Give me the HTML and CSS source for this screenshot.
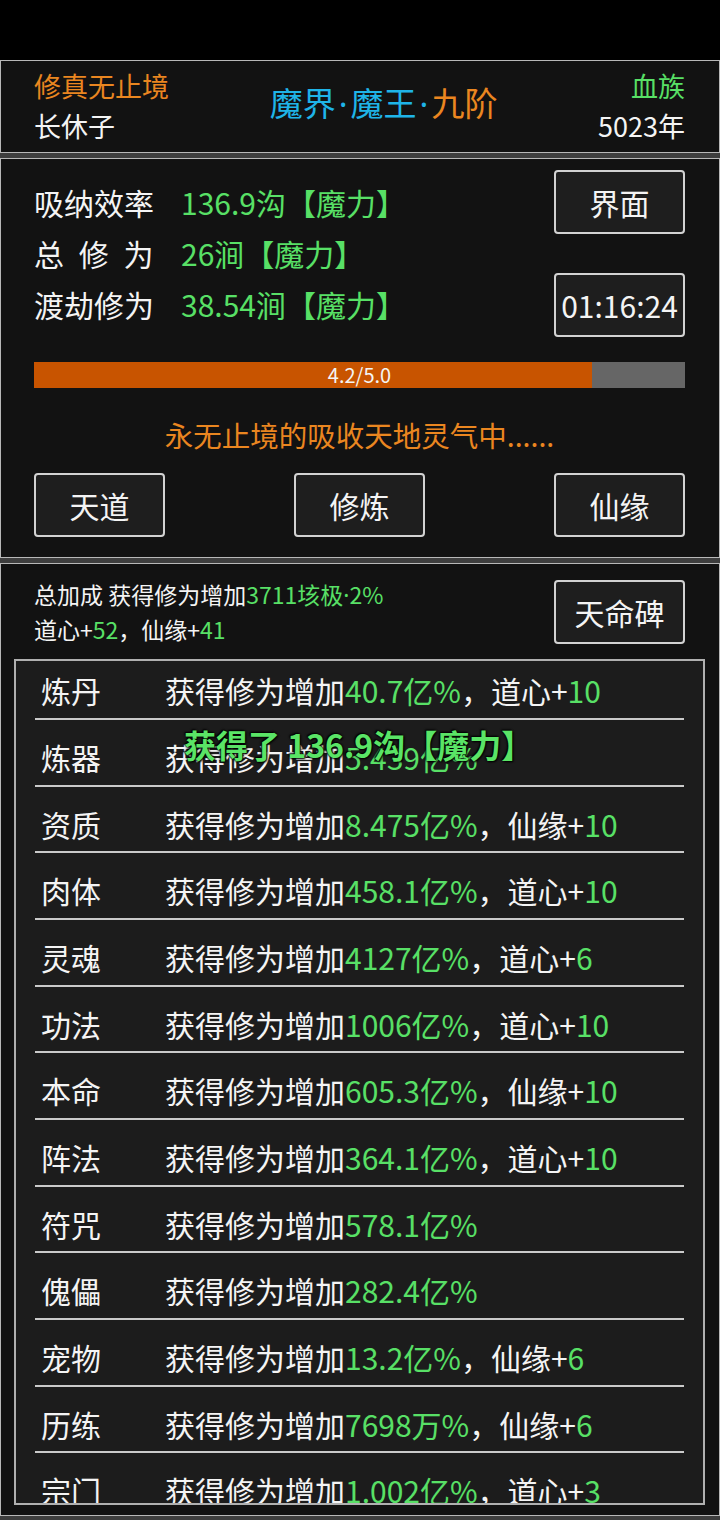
FILE: index.html
```html
<!DOCTYPE html>
<html lang="zh-CN">
<head>
  <meta charset="UTF-8">
  <meta name="viewport" content="width=device-width, initial-scale=1.0">
  <title>修真无止境</title>
  <link rel="stylesheet" href="styles.css">
</head>
<body>
  <div class="statusbar"></div>

  <div class="panel head">
    <div class="head-col">
      <div class="orange">修真无止境</div>
      <div>长休子</div>
    </div>
    <div class="realm"><span class="cyan">魔界<span class="dot">·</span>魔王<span class="dot">·</span></span><span class="orange">九阶</span></div>
    <div class="head-col right">
      <div class="green">血族</div>
      <div>5023年</div>
    </div>
  </div>

  <div class="panel main">
    <div class="stats">
      <div class="stat-list">
        <div class="stat"><span class="stat-label">吸纳效率</span><span class="green">136.9沟【魔力】</span></div>
        <div class="stat"><span class="stat-label spaced">总 修 为</span><span class="green">26涧【魔力】</span></div>
        <div class="stat"><span class="stat-label">渡劫修为</span><span class="green">38.54涧【魔力】</span></div>
      </div>
      <div class="side-btns">
        <button class="btn">界面</button>
        <button class="btn">01:16:24</button>
      </div>
    </div>
    <div class="progress">
      <div class="progress-fill" style="width: 85.7%"></div>
      <span class="progress-text">4.2/5.0</span>
    </div>
    <div class="message">永无止境的吸收天地灵气中......</div>
    <div class="actions">
      <button class="btn">天道</button>
      <button class="btn">修炼</button>
      <button class="btn">仙缘</button>
    </div>
  </div>

  <div class="panel bonus">
    <div class="bonus-head">
      <div class="bonus-text">
        <div>总加成 获得修为增加<span class="green">3711垓极<span class="dot">·</span>2%</span></div>
        <div>道心+<span class="green">52</span>，仙缘+<span class="green">41</span></div>
      </div>
      <button class="btn">天命碑</button>
    </div>
    <div class="list">
      <div class="row"><span class="row-name">炼丹</span><span>获得修为增加<span class="green">40.7亿%</span>，道心+<span class="green">10</span></span></div>
      <div class="row"><span class="row-name">炼器</span><span>获得修为增加<span class="green">5.439亿%</span></span></div>
      <div class="row"><span class="row-name">资质</span><span>获得修为增加<span class="green">8.475亿%</span>，仙缘+<span class="green">10</span></span></div>
      <div class="row"><span class="row-name">肉体</span><span>获得修为增加<span class="green">458.1亿%</span>，道心+<span class="green">10</span></span></div>
      <div class="row"><span class="row-name">灵魂</span><span>获得修为增加<span class="green">4127亿%</span>，道心+<span class="green">6</span></span></div>
      <div class="row"><span class="row-name">功法</span><span>获得修为增加<span class="green">1006亿%</span>，道心+<span class="green">10</span></span></div>
      <div class="row"><span class="row-name">本命</span><span>获得修为增加<span class="green">605.3亿%</span>，仙缘+<span class="green">10</span></span></div>
      <div class="row"><span class="row-name">阵法</span><span>获得修为增加<span class="green">364.1亿%</span>，道心+<span class="green">10</span></span></div>
      <div class="row"><span class="row-name">符咒</span><span>获得修为增加<span class="green">578.1亿%</span></span></div>
      <div class="row"><span class="row-name">傀儡</span><span>获得修为增加<span class="green">282.4亿%</span></span></div>
      <div class="row"><span class="row-name">宠物</span><span>获得修为增加<span class="green">13.2亿%</span>，仙缘+<span class="green">6</span></span></div>
      <div class="row"><span class="row-name">历练</span><span>获得修为增加<span class="green">7698万%</span>，仙缘+<span class="green">6</span></span></div>
      <div class="row"><span class="row-name">宗门</span><span>获得修为增加<span class="green">1.002亿%</span>，道心+<span class="green">3</span></span></div>
      <div class="toast">获得了 136.9沟【魔力】</div>
    </div>
  </div>
</body>
</html>
```

FILE: styles.css
```css
:root {
  --panel: #121212;
  --line: #b8b8b8;
  --orange: #ea8620;
  --green: #58e066;
  --cyan: #1fb4e8;
  --white: #f4f4f4;
}
body {
  margin: 0;
  background: #3e3e3e;
  color: var(--white);
  font-family: "Noto Sans CJK SC", "Noto Sans", sans-serif;
  font-size: 30px;
  height: 1520px;
  overflow: hidden;
}
.statusbar { height: 60px; background: #000; }
.orange { color: var(--orange); }
.green { color: var(--green); }
.cyan { color: var(--cyan); }
.dot { font-family: "Noto Sans", sans-serif; }

.panel {
  background: var(--panel);
  border: 1px solid var(--line);
  margin-bottom: 5px;
  padding: 0 34px 0 33px;
}

/* header */
.head {
  display: flex;
  justify-content: space-between;
  align-items: center;
  padding-top: 5px;
  padding-bottom: 6px;
}
.head-col { font-size: 27px; line-height: 40px; }
.head-col.right { text-align: right; }
.realm { font-size: 33px; line-height: 40px; padding-bottom: 6px; }
.realm .dot { padding: 0 3px; }

/* main panel */
.main { padding-top: 11px; padding-bottom: 20px; }
.stats {
  display: flex;
  justify-content: space-between;
  align-items: center;
}
.stat { line-height: 51px; display: flex; }
.stat-label { width: 147px; }
.spaced { word-spacing: 8px; }
.side-btns {
  display: flex;
  flex-direction: column;
  gap: 39px;
}
.btn {
  width: 131px;
  height: 64px;
  padding: 0;
  background: #1e1e1e;
  color: var(--white);
  border: 2px solid #d2d2d2;
  border-radius: 4px;
  font-family: inherit;
  font-size: 30px;
}
.progress {
  position: relative;
  height: 26px;
  margin-top: 25px;
  background: #666;
  display: flex;
  justify-content: center;
  align-items: center;
}
.progress-fill {
  position: absolute;
  left: 0;
  top: 0;
  bottom: 0;
  background: #c85400;
}
.progress-text { position: relative; font-size: 20px; line-height: 26px; }
.message {
  margin-top: 27px;
  line-height: 40px;
  font-size: 28.5px;
  color: var(--orange);
  text-align: center;
}
.actions {
  display: flex;
  justify-content: space-between;
  margin-top: 18px;
}

/* bonus panel */
.bonus { padding: 13px 0 10px; margin-bottom: 0; }
.bonus-head {
  display: flex;
  justify-content: space-between;
  align-items: center;
  padding: 0 34px 0 33px;
}
.bonus-text { font-size: 23px; line-height: 34px; }
.list {
  position: relative;
  margin: 13px 14px 0 13px;
  height: 846px;
  overflow: hidden;
  box-sizing: border-box;
  background: #1c1c1c;
  border: 2px solid #b0b0b0;
  padding: 0 19px;
}
.row {
  display: flex;
  height: 66.67px;
  box-sizing: border-box;
  padding: 17px 0 0 6px;
  line-height: 40px;
  border-bottom: 2px solid #cacaca;
}
.row:first-child { height: 59px; padding-top: 9px; }
.row-name { width: 124px; }
.toast {
  position: absolute;
  left: 168px;
  top: 63px;
  line-height: 40px;
  font-size: 32px;
  font-weight: bold;
  color: #5ae466;
  text-shadow: 0 0 2px #000, 1px 1px 2px #000, -1px -1px 2px #000;
}
```
